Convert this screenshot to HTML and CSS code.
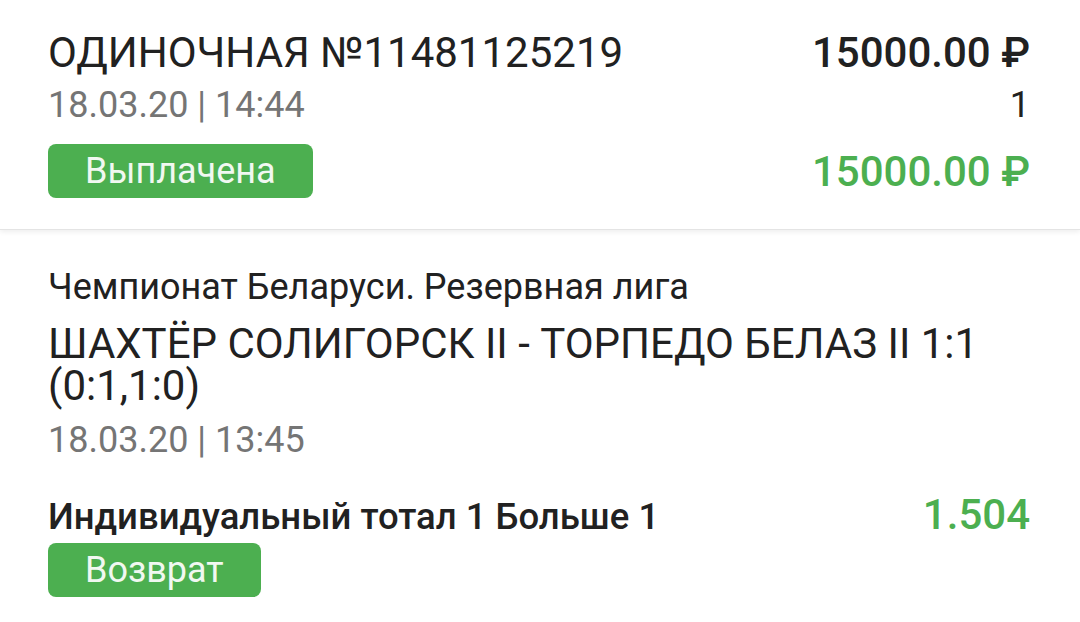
FILE: index.html
```html
<!doctype html>
<html>
<head>
  <title>Ставка №11481125219</title>
  <link rel="stylesheet" href="styles.css">
</head>
<body>
  <section class="coupon">
    <div class="row row-title">
      <h1 class="title">ОДИНОЧНАЯ №11481125219</h1>
      <span class="amount">15000.00 ₽</span>
    </div>
    <div class="row row-date">
      <span class="date">18.03.20 | 14:44</span>
      <span class="count">1</span>
    </div>
    <div class="row row-status">
      <span class="badge">Выплачена</span>
      <span class="amount win">15000.00 ₽</span>
    </div>
  </section>

  <section class="event">
    <p class="league">Чемпионат Беларуси. Резервная лига</p>
    <h2 class="match">ШАХТЁР СОЛИГОРСК II - ТОРПЕДО БЕЛАЗ II 1:1 (0:1,1:0)</h2>
    <p class="date">18.03.20 | 13:45</p>
    <div class="row row-bet">
      <span class="bet">Индивидуальный тотал 1 Больше 1</span>
      <span class="odds">1.504</span>
    </div>
    <span class="badge">Возврат</span>
  </section>
</body>
</html>
```

FILE: styles.css
```css
body {
  margin: 0;
  background: #fff;
  color: #212121;
  font-family: Roboto, "Noto Sans", Arial, sans-serif;
}

.coupon {
  padding: 27px 50px 31px 48px;
  border-bottom: 1px solid #e4e4e4;
  box-shadow: 0 2px 5px rgba(0, 0, 0, .07);
}
.event {
  padding: 35px 50px 0 48px;
}

.row {
  display: flex;
  justify-content: space-between;
  align-items: baseline;
}
.row-date {
  margin-top: 4px;
}
.row-status {
  align-items: center;
  margin-top: 17px;
}

.title {
  margin: 0;
  font-size: 42px;
  font-weight: 400;
  line-height: 52px;
}
.amount {
  font-size: 42px;
  font-weight: 500;
}
.amount.win {
  color: #4caf50;
}
.date {
  color: #757575;
  font-size: 36px;
  line-height: 44px;
}
.count {
  font-size: 36px;
  line-height: 44px;
}

.badge {
  display: inline-block;
  box-sizing: border-box;
  height: 54px;
  line-height: 54px;
  padding: 0 37px;
  border-radius: 8px;
  background: #4caf50;
  color: #f1f8f1;
  font-size: 36px;
}

.league {
  margin: 0;
  font-size: 36px;
  line-height: 44px;
}
.match {
  margin: 14px 0 0;
  font-size: 42px;
  font-weight: 400;
  line-height: 42px;
}
.event .date {
  margin: 11px 0 0;
}

.row-bet {
  margin-top: 29px;
}
.bet {
  font-size: 36.5px;
  font-weight: 500;
  line-height: 48px;
}
.odds {
  color: #4caf50;
  font-size: 42px;
  font-weight: 500;
  line-height: 48px;
}
.event .badge {
  margin-top: 2px;
}
```
